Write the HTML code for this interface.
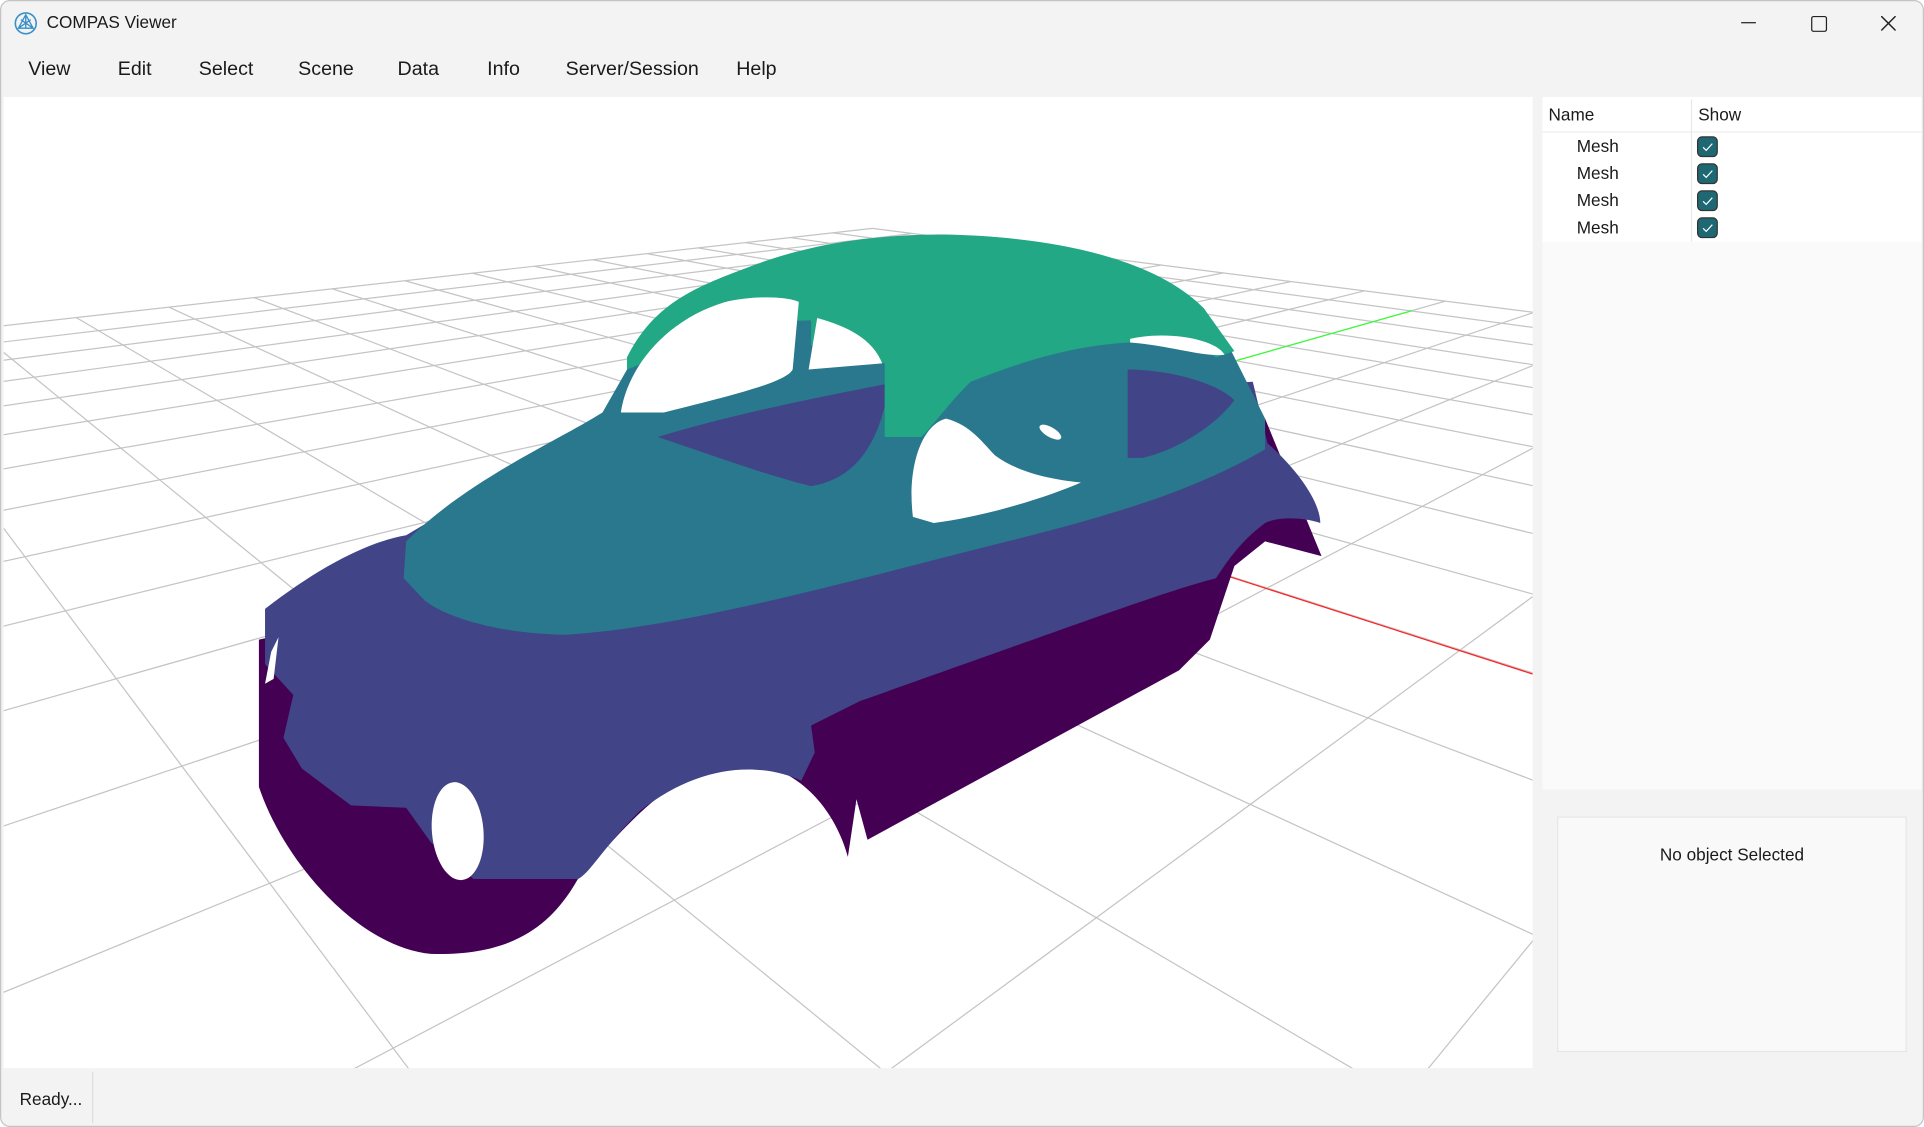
<!DOCTYPE html>
<html><head><meta charset="utf-8"><style>
html,body{margin:0;padding:0;width:1924px;height:1127px;overflow:hidden;background:#fff}
#w{position:absolute;left:0;top:0;width:1568px;height:918px;transform-origin:0 0;transform:scale(1.22704,1.22767);background:#f3f3f3;font-family:"Segoe UI","Liberation Sans","DejaVu Sans",sans-serif;color:#1a1a1a;border:1px solid #c4c4c4;box-sizing:border-box;border-radius:8px;overflow:hidden}
.a{position:absolute}
.menu span{position:absolute;top:47px;font-size:16px}
.row{position:absolute;left:1284px;font-size:14px}
.cb{position:absolute;left:1382px;width:17px;height:17px;border-radius:4px;background:#1e6873;border:1px solid #333;box-sizing:border-box}
.cb svg{position:absolute;left:2px;top:2px}
</style></head><body><div id="w">
<svg class="a" style="left:10px;top:8px" width="20" height="20" viewBox="0 0 20 20"><circle cx="10" cy="10" r="8.5" fill="none" stroke="#3a8fc8" stroke-width="1.3"/><path d="M10 3 L4 14 H16 Z M10 3 V14 M4 14 L14 7 M16 14 L6 7" fill="none" stroke="#3a8fc8" stroke-width="1.1"/></svg>
<div class="a" style="left:37px;top:9px;font-size:14px">COMPAS Viewer</div>
<div class="a" style="left:1418px;top:17px;width:12px;height:1px;background:#222"></div>
<div class="a" style="left:1475px;top:12px;width:11px;height:11px;border:1px solid #222;border-radius:2px"></div>
<svg class="a" style="left:1532px;top:12px" width="12" height="12"><path d="M0 0L12 12M12 0L0 12" stroke="#222" stroke-width="1.2"/></svg>
<div class="menu"><span style="left:22px">View</span><span style="left:95px">Edit</span><span style="left:161px">Select</span><span style="left:242px">Scene</span><span style="left:323px">Data</span><span style="left:396px">Info</span><span style="left:460px">Server/Session</span><span style="left:599px">Help</span></div>
<svg class="a" id="vp" style="left:2px;top:78px;background:#fff" width="1246" height="791" viewBox="2 78 1246 791">
<g id="grid" stroke="#c4c4c4" stroke-width="1" fill="none"></g>
<line x1="745" y1="367" x2="1150" y2="252" stroke="#3f3" stroke-width="1"/>
<line x1="740" y1="385" x2="1248" y2="548" stroke="#f22" stroke-width="1"/>
<path fill="#440154" d="M210,520 L1030,340 L1076,452 L1030,440 L1005,460 L985,520 L960,545 L706,683 L697,650 L690,697 C680,660 650,620 600,620 C540,625 495,690 470,715 C450,750 420,778 350,776 C290,770 230,700 210,640 Z"/>
<path fill="#414487" d="M215,495 C260,460 300,440 330,435 L490,340 L1020,310 L1032,360 C1060,385 1075,410 1075,425 C1060,420 1040,420 1030,425 C1010,440 1000,455 990,470 C950,480 870,510 700,570 L660,590 L663,612 L652,635 C620,620 570,620 520,660 C490,690 480,710 470,715 L385,715 L350,685 L330,657 L285,655 L245,625 L230,600 L238,565 L215,540 Z"/>
<path fill="#440154" d="M760,350 L800,345 C840,350 870,355 900,365 L905,392 L880,392 C850,385 820,380 800,368 Z"/>
<path fill="#2a788e" d="M330,440 C380,390 450,360 490,335 L530,265 C560,240 640,230 720,270 L1000,280 L1030,340 L1030,365 C970,400 900,420 820,440 C700,470 560,510 460,516 C400,515 360,500 345,488 L328,470 Z"/>
<path fill="#414487" d="M535,355 C600,335 680,320 720,312 L720,330 C710,370 690,390 660,395 C620,385 580,370 535,355 Z"/>
<path fill="#414487" d="M918,300 C950,300 990,310 1005,325 C990,345 960,365 930,372 L918,372 Z"/>
<path fill="#22a884" d="M510,290 C530,250 560,235 600,220 C650,200 700,190 770,190 C860,192 940,210 980,250 L1005,285 L990,290 C960,270 940,275 920,278 C880,280 840,290 790,310 C770,330 760,345 750,355 L720,355 L720,295 C700,290 680,285 660,280 L660,260 C620,260 560,280 510,300 Z"/>
<path fill="#fff" d="M505,335 C510,300 540,260 590,245 C610,240 640,240 650,245 L645,300 C640,310 600,320 540,335 Z"/>
<path fill="#fff" d="M658,300 L665,258 C690,265 710,275 718,295 Z"/>
<path fill="#fff" d="M743,420 C738,380 750,345 770,340 C790,345 800,360 810,370 C830,385 860,390 880,392 C850,405 800,420 760,425 Z"/>
<path fill="#fff" d="M920,275 C950,268 990,275 997,288 C980,290 950,280 920,278Z"/>
<ellipse cx="855" cy="351" rx="10" ry="4" transform="rotate(30 855 351)" fill="#fff"/>
<ellipse cx="372" cy="676" rx="21" ry="40" transform="rotate(-5 372 676)" fill="#fff"/>
<path fill="#fff" d="M220,530 L226,518 L222,552 L215,556 Z"/>
</svg>
<div class="a" style="left:1256px;top:78px;width:309px;height:564px;background:#fafafa"></div>
<div class="a" style="left:1256px;top:78px;width:309px;height:118px;background:#fff"></div>
<div class="a" style="left:1256px;top:106px;width:309px;height:1px;background:#eee"></div>
<div class="a" style="left:1377px;top:80px;width:1px;height:116px;background:#e8e8e8"></div>
<div class="a" style="left:1261px;top:84px;font-size:14px">Name</div>
<div class="a" style="left:1383px;top:84px;font-size:14px">Show</div>
<div class="row" style="top:110px">Mesh</div><div class="row" style="top:132px">Mesh</div><div class="row" style="top:154px">Mesh</div><div class="row" style="top:176px">Mesh</div>
<div class="cb" style="top:110px"><svg width="11" height="11"><path d="M2 6L4.5 8.5L9.5 3" stroke="#fff" fill="none" stroke-width="1"/></svg></div>
<div class="cb" style="top:132px"><svg width="11" height="11"><path d="M2 6L4.5 8.5L9.5 3" stroke="#fff" fill="none" stroke-width="1"/></svg></div>
<div class="cb" style="top:154px"><svg width="11" height="11"><path d="M2 6L4.5 8.5L9.5 3" stroke="#fff" fill="none" stroke-width="1"/></svg></div>
<div class="cb" style="top:176px"><svg width="11" height="11"><path d="M2 6L4.5 8.5L9.5 3" stroke="#fff" fill="none" stroke-width="1"/></svg></div>
<div class="a" style="left:1268px;top:664px;width:285px;height:192px;background:#f9f9f9;border:1px solid #e6e6e6;box-sizing:border-box"></div>
<div class="a" style="left:1268px;top:687px;width:285px;text-align:center;font-size:14px">No object Selected</div>
<div class="a" style="left:74px;top:872px;width:1px;height:42px;background:#ddd"></div>
<div class="a" style="left:15px;top:886px;font-size:14px">Ready...</div>
</div>
<script>
var O=[713,376],V1=[1826,60],V2=[-275,60],K=[710,185],N=10;
function inter(a,b,c,d){var x1=a[0],y1=a[1],x2=b[0],y2=b[1],x3=c[0],y3=c[1],x4=d[0],y4=d[1];
var den=(x1-x2)*(y3-y4)-(y1-y2)*(x3-x4);var t=((x1-x3)*(y3-y4)-(y1-y3)*(x3-x4))/den;return [x1+t*(x2-x1),y1+t*(y2-y1)];}
function dist(a,b){return Math.hypot(a[0]-b[0],a[1]-b[1]);}
// A: far edge on red axis (toward V2); B: far edge on green axis (toward V1)
var A=inter(K,V1,O,V2),B=inter(K,V2,O,V1);
var s2=dist(O,A)/dist(O,V2),s1=dist(O,B)/dist(O,V1);
var c2=s2/(N*(1-s2)),c1=s1/(N*(1-s1));
function P(V,c,t){var d=1+t*c;return [(O[0]+t*c*V[0])/d,(O[1]+t*c*V[1])/d];}
var s='';
function seg(far,V){var dx=far[0]-V[0],dy=far[1]-V[1],l=Math.hypot(dx,dy);var e=[far[0]+dx/l*4000,far[1]+dy/l*4000];
s+='<line x1="'+far[0].toFixed(1)+'" y1="'+far[1].toFixed(1)+'" x2="'+e[0].toFixed(1)+'" y2="'+e[1].toFixed(1)+'"/>';}
// family1 lines: through P(V2,c2,n), direction V1; far end on line K-V2
for(var n=-N;n<=N;n++){var d=1+n*c2;if(d<0.05)continue;var p=P(V2,c2,n);var far=inter(p,V1,K,V2);seg(far,V1);}
for(var m=-N;m<=N;m++){var d=1+m*c1;if(d<0.05)continue;var p=P(V1,c1,m);var far=inter(p,V2,K,V1);seg(far,V2);}
document.getElementById('grid').innerHTML=s;
</script>
</body></html>
